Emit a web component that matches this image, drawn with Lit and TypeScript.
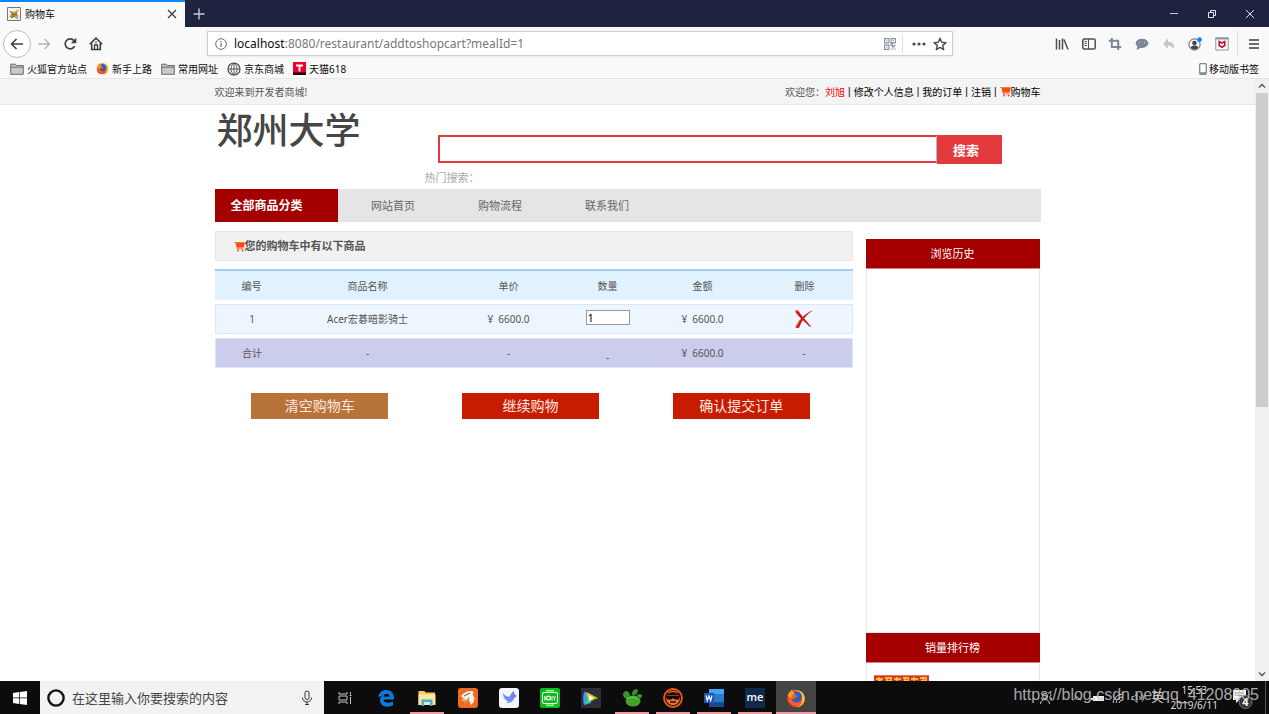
import { LitElement, html, css, svg, TemplateResult } from "lit";
import { customElement, property } from "lit/decorators.js";

const cartIcon = html`<svg class="cart" width="11" height="11" viewBox="0 0 11 11" aria-hidden="true">
  <path d="M.3 1h1.6l.4 1.2h8.4L9.6 6.4H3.6l.3 1h5.5v.8H3.1L1.4 1.8H.3z" fill="#ff4a0a" />
  <path d="M2.3 1.200h8.4L9.6 6.200H3.4z" fill="#ff4a0a" />
  <circle cx="4" cy="9.4" r="1" fill="#ff4a0a" /><circle cx="8.6" cy="9.4" r="1" fill="#ff4a0a" />
</svg>`;

const firefoxMark = svg`
  <circle cx="10" cy="10.400" r="8.600" fill="#ff5a1f"/>
  <path d="M9 3C14 1 19 5 18.800 11 18.500 16 15 19.400 10 19.400c4-1 6.500-4 6-8C15.600 7.500 13 5 9 3z" fill="#ffc021"/>
  <path d="M6 5.500C8 2 14 2.500 15.500 6.500c1.500 4-.5 7.500-4.500 8-3 .2-5-1.500-5.500-4 1.500.8 3 .5 3.500-.5.800-1 1.800-.8 2.400-1.200C10 6.500 8.500 7 6 5.500z" fill="#2b5fc4"/>
  <path d="M1.500 7.500C3 4 5 2 6.500 1.500 6 3.500 7.500 5 9.500 5.500 7 6 6 7 6.200 9L4 10z" fill="#ff9a1f"/>
  <path d="M1.300 8.500c0 5 3.500 8.500 8 10C4.500 19.500 1 14.500 1.300 8.500z" fill="#e3244f"/>`;

const folder = html`<svg width="14" height="12" viewBox="0 0 14 12" aria-hidden="true">
  <path d="M.7 1.200h4.600l1 1.300h7v8.800H.7z" fill="#c9c9c9" stroke="#6b6b6b" />
  <path d="M1 4.200h12.200" stroke="#6b6b6b" />
</svg>`;

@customElement("browser-chrome")
export class BrowserChrome extends LitElement {
  static styles = css`
    :host { display: block; flex: none; background: #f9f9fa; color: #0c0c0d;
      font: 10px/14px "Noto Sans", "Noto Sans CJK SC", sans-serif; }
    svg { flex: none; display: block; }
    button { border: 0; background: none; padding: 0; margin: 0; font: inherit; color: inherit;
      display: flex; align-items: center; justify-content: center; }
    a { color: inherit; text-decoration: none; }
    .tabs { display: flex; height: 27px; background: #202340; }
    .tab { width: 185px; box-sizing: border-box; border-top: 2px solid #0a84ff; background: #f9f9fa;
      display: flex; align-items: center; gap: 4px; padding: 0 8px 2px 7px; }
    .tab span { flex: 1; }
    .new { width: 28px; }
    .win { margin-left: auto; display: flex; }
    .win button { width: 38px; }
    .bar { display: flex; height: 33px; align-items: center; }
    .nav { width: 207px; display: flex; align-items: center; padding-left: 3px; box-sizing: border-box; }
    .back { width: 28px; height: 28px; box-sizing: border-box; border: 1px solid #bdbdbf; border-radius: 50%; background: #fff; }
    .step { width: 26px; height: 28px; }
    .url { flex: 1; height: 25px; box-sizing: border-box; display: flex; align-items: center; background: #fff;
      border: 1px solid #cfcfd1; box-shadow: 0 1px 2px #0001; padding: 0 5px 0 7px; gap: 7px; }
    .address { flex: 1; font-size: 12px; line-height: 16px; color: #77777b; white-space: nowrap; }
    .address b { font-weight: 400; color: #0c0c0d; }
    .split { width: 1px; height: 18px; background: #ddd; margin: 0 2px 0 -1px; }
    .tools { width: 186px; margin-left: 96px; display: grid; grid-template-columns: repeat(7, 1fr); }
    .menu { width: 32px; height: 26px; border-left: 1px solid #dcdcde; margin-left: 2px; }
    .marks { display: flex; height: 19px; align-items: center; gap: 9px; padding: 0 10px 1px; border-bottom: 1px solid #e6e6e6; box-sizing: border-box; }
    .marks a { display: flex; align-items: center; gap: 3px; white-space: nowrap; }
    .marks .mobile { margin-left: auto; gap: 2px; }
  `;

  render() {
    return html`
      <div class="tabs">
        <div class="tab">
          <svg width="14" height="14" viewBox="0 0 14 14"><path d="M.5.500h13v13H.5z" fill="#f4f4f4" stroke="#777"/><path d="M2 10 5 6 3 4l4 1 5-3-2 4 2 5-4-2-3 2z" fill="#c8963a"/><path d="M3 4l3 4 4-1M4 11l3-2 4 3" stroke="#59482d" fill="none" stroke-width=".8"/></svg>
          <span>购物车</span>
          <button aria-label="关闭标签页"><svg width="10" height="10" viewBox="0 0 10 10"><path d="M1 1l8 8M9 1l-8 8" stroke="#3a3a3c" stroke-width="1.200"/></svg></button>
        </div>
        <button class="new" aria-label="新标签页"><svg width="12" height="12" viewBox="0 0 12 12"><path d="M6 .500v11M.5 6h11" stroke="#c9cad3" stroke-width="1.400"/></svg></button>
        <div class="win">
          <button aria-label="最小化"><svg width="10" height="10" viewBox="0 0 10 10"><path d="M1 4.500h8" stroke="#c9cad3"/></svg></button>
          <button aria-label="还原"><svg width="10" height="10" viewBox="0 0 10 10"><path d="M1.500 3.500h5v5h-5zM3.500 3.500v-2h5v5h-2" fill="none" stroke="#e4e4ea"/></svg></button>
          <button aria-label="关闭"><svg width="10" height="10" viewBox="0 0 10 10"><path d="M1 1l8 8M9 1l-8 8" stroke="#e4e4ea"/></svg></button>
        </div>
      </div>
      <div class="bar">
        <div class="nav">
          <button class="back" aria-label="后退"><svg width="14" height="14" viewBox="0 0 14 14"><path d="M13 7H1.500M6.500 2l-5 5 5 5" fill="none" stroke="#3f3f42" stroke-width="1.600"/></svg></button>
          <button class="step" aria-label="前进"><svg width="14" height="14" viewBox="0 0 14 14"><path d="M1 7h11.500M7.500 2l5 5-5 5" fill="none" stroke="#b4b4b6" stroke-width="1.400"/></svg></button>
          <button class="step" aria-label="刷新"><svg width="14" height="14" viewBox="0 0 14 14"><path d="M11.600 9.200A5 5 0 1 1 11 3.600" fill="none" stroke="#3f3f42" stroke-width="1.700"/><path d="M13.300.800v5.400H7.900z" fill="#3f3f42"/></svg></button>
          <button class="step" aria-label="主页"><svg width="14" height="14" viewBox="0 0 14 14"><path d="M.8 7.200 7 1.200l6.200 6M2.700 6.500v6h8.600v-6" fill="none" stroke="#3f3f42" stroke-width="1.600"/><path d="M5.500 12.500V8h3v4.500M7 4.600v1.800" fill="none" stroke="#3f3f42" stroke-width="1.300"/></svg></button>
        </div>
        <div class="url">
          <svg width="12" height="12" viewBox="0 0 12 12"><circle cx="6" cy="6" r="5.300" fill="none" stroke="#6c6c70"/><path d="M6 5.200v3.600M6 2.900v1.300" stroke="#6c6c70" stroke-width="1.300"/></svg>
          <span class="address"><b>localhost</b>:8080/restaurant/addtoshopcart?mealId=1</span>
          <svg width="12" height="12" viewBox="0 0 12 12"><path d="M.6.600h4.300v4.300H.6zM7.100.600h4.300v4.300H7.100zM.6 7.100h4.300v4.300H.6zM2.200 2.700h1.200M8.700 2.700h1.200M2.200 9.200h1.200M6.500 7.500h2v1.500h1.500V7.500h1.500M7 11h1.500M10 11h1.500M6 6h3" fill="none" stroke="#8790a0" stroke-width="1.100"/></svg>
          <i class="split"></i>
          <svg width="14" height="4" viewBox="0 0 14 4"><g fill="#4a4a4f"><circle cx="2" cy="2" r="1.600"/><circle cx="7" cy="2" r="1.600"/><circle cx="12" cy="2" r="1.600"/></g></svg>
          <svg width="14" height="14" viewBox="0 0 14 14"><path d="M7 1.200l1.700 4 4.300.400-3.300 2.800 1 4.300L7 10.400l-3.700 2.300 1-4.300L1 5.600l4.300-.4z" fill="none" stroke="#4a4a4f" stroke-width="1.400" stroke-linejoin="round"/></svg>
        </div>
        <div class="tools">
          <button aria-label="书库"><svg width="14" height="14" viewBox="0 0 14 14"><path d="M1.500 1.500v11M4.500 3v9.500M7.500 1.500v11M9 2.500l4 10" stroke="#4f4f53" stroke-width="1.500"/></svg></button>
          <button aria-label="侧栏"><svg width="14" height="14" viewBox="0 0 14 14"><rect x=".8" y="2" width="12.400" height="10" rx="1.500" fill="none" stroke="#4f4f53" stroke-width="1.500"/><path d="M6.500 2v10" stroke="#4f4f53"/><path d="M2.500 4.500H5M2.500 6.500H5M2.500 8.500H5" stroke="#4f4f53" stroke-width=".9"/></svg></button>
          <button aria-label="截图"><svg width="14" height="14" viewBox="0 0 14 14"><path d="M3.800 1v9h9.400M.8 3.800h9.400V13" fill="none" stroke="#7b8796" stroke-width="2"/></svg></button>
          <button aria-label="消息"><svg width="14" height="14" viewBox="0 0 14 14"><ellipse cx="7" cy="6.300" rx="6.300" ry="4.600" fill="#7b8796"/><path d="M2.500 9 1.500 13l5-2.500z" fill="#7b8796"/><path d="M4 5.500h1M9 5.500h1" stroke="#c8ced6"/></svg></button>
          <button aria-label="撤销"><svg width="14" height="14" viewBox="0 0 14 14"><path d="M6 1.500v3.300c5 0 7 3 5.500 7.700C10.500 9.600 9 8.500 6 8.500V12L1 6.700z" fill="#c3c7cd"/></svg></button>
          <button aria-label="账户"><svg width="14" height="14" viewBox="0 0 14 14"><circle cx="6.500" cy="7.500" r="5.600" fill="none" stroke="#55575b"/><circle cx="6.500" cy="6" r="2.300" fill="#45474b"/><path d="M2.600 10.500c1.500-2.600 6.300-2.600 7.800 0-2 2.500-5.800 2.500-7.800 0z" fill="#45474b"/><circle cx="11.500" cy="2.700" r="2.400" fill="#0a84ff"/></svg></button>
          <button aria-label="安全"><svg width="14" height="14" viewBox="0 0 14 14"><path d="M.8 1h12.400v12H.8z" fill="#fff" stroke="#8a95a3"/><path d="M.5 1.500h13" stroke="#8a95a3" stroke-width="2"/><path d="M4.200 4.500 7 6l2.800-1.500v4L7 10.200 4.200 8.500z" fill="none" stroke="#c01828" stroke-width="1.600"/></svg></button>
        </div>
        <button class="menu" aria-label="菜单"><svg width="12" height="12" viewBox="0 0 12 12"><path d="M1 2h10M1 6h10M1 10h10" stroke="#3f3f42" stroke-width="1.500"/></svg></button>
      </div>
      <nav class="marks">
        <a href="#">${folder}火狐官方站点</a>
        <a href="#"><svg width="13" height="13" viewBox="0 0 20 20">${firefoxMark}</svg>新手上路</a>
        <a href="#">${folder}常用网址</a>
        <a href="#"><svg width="14" height="14" viewBox="0 0 14 14"><circle cx="7" cy="7" r="6" fill="none" stroke="#4a4a4f" stroke-width="1.200"/><path d="M7 1v12M1 7h12M7 1c-4 3-4 9 0 12M7 1c4 3 4 9 0 12" fill="none" stroke="#4a4a4f" stroke-width=".9"/></svg>京东商城</a>
        <a href="#"><svg width="13" height="13" viewBox="0 0 13 13"><path d="M0 0h13v13H0z" fill="#e8022d"/><path d="M0 10.500h13V13H0z" fill="#2b0208"/><path d="M3 3.500h7M6.500 3.500v6" stroke="#fff" stroke-width="1.800"/></svg>天猫618</a>
        <a class="mobile" href="#"><svg width="8" height="12" viewBox="0 0 8 12"><rect x=".7" y=".7" width="6.600" height="10.600" rx="1" fill="#fff" stroke="#7b8796" stroke-width="1.300"/><path d="M1 10h6" stroke="#7b8796" stroke-width="1.600"/></svg>移动版书签</a>
      </nav>
    `;
  }
}

@customElement("shop-page")
export class ShopPage extends LitElement {
  @property({ attribute: false }) items = [{ id: 1, name: "Acer宏碁暗影骑士", price: "6600.0", count: 1, sum: "6600.0" }];

  static styles = css`
    :host { display: flex; flex: 1; min-height: 0; overflow: hidden; background: #fff; color: #555;
      font: 10px/14px "Noto Sans", "Noto Sans CJK SC", sans-serif; }
    a { color: inherit; text-decoration: none; }
    svg { flex: none; }
    button { border: 0; margin: 0; padding: 0; font: inherit; color: #fff; }
    .page { flex: 1; min-width: 0; overflow: hidden; }
    .wrap { max-width: 826px; margin: 0 auto; }
    .strip { background: #f4f4f4; border-bottom: 1px solid #e9e9e9; }
    .strip .wrap { display: flex; justify-content: space-between; line-height: 23px; padding-top: 2px; }
    .links { display: flex; gap: 3px; color: #000; }
    .links i { font: 10px/22px "Liberation Sans", sans-serif; }
    .links span { color: #555; }
    .links .user { color: #f00; }
    .links .basket { display: flex; }
    .links .cart { margin-top: 5px; }
    .head { display: grid; grid-template-columns: 210px 1fr; height: 84px; }
    .logo { margin: 0 0 0 2px; font: 500 36px/46px "Noto Sans CJK SC", sans-serif; color: #464646; }
    .find { padding-top: 30px; }
    .find form { display: flex; margin: 0 39px 0 13px; height: 29px; align-items: flex-start; }
    .find input { flex: 1; min-width: 0; height: 28px; box-sizing: border-box; border: 2px solid #e4393c; border-right: 1px solid #bbb;
      background: #fff; outline: 0; border-radius: 0; padding: 0 6px; }
    .find button { width: 65px; height: 29px; background: #e4393c; font-size: 13px; font-weight: 700; padding-right: 6px; }
    .find p { margin: 6px 0 0; color: #aaa; font-size: 11px; line-height: 16px; }
    .menu { display: flex; background: #e5e5e5; height: 33px; line-height: 34px; font-size: 11px; color: #666; }
    .menu a { width: 107px; text-align: center; }
    .menu .all { width: 123px; box-sizing: border-box; padding-left: 16px; margin-right: 2px; background: #a40000; color: #fff; font-size: 12px; font-weight: 700; text-align: left; }
    .main { display: grid; grid-template-columns: minmax(0, 1fr) 174px; column-gap: 13px; padding: 9px 1px 0 0; }
    h1 { margin: 0; display: flex; align-items: center; height: 30px; box-sizing: border-box; padding-left: 18px;
      background: #f1f1f1; border: 1px solid #e8e8e8; font-size: 11px; font-weight: 700; color: #555; }
    table { width: 100%; table-layout: fixed; border-collapse: separate; border-spacing: 0 4px; margin-top: 4px; }
    th, td { height: 30px; box-sizing: border-box; padding: 0; font-weight: 400; text-align: center; vertical-align: middle; white-space: pre; }
    th { background: #e1f2ff; border-top: 2px solid #a6c9fb; height: 31px; }
    .c1 { width: 74px; } .c2 { width: 158px; } .c3 { width: 124px; } .c4 { width: 74px; } .c5 { width: 116px; }
    th:last-child, td:last-child { padding-right: 4px; }
    td { background: #edf6ff; border: solid #d9e7fd; border-width: 1px 0; }
    td:first-child { border-left-width: 1px; }
    td:last-child { border-right-width: 1px; }
    .total td { background: #ccccec; }
    .total .low { padding-top: 8px; }
    td input { display: block; width: 44px; height: 15px; box-sizing: border-box; margin: 0 auto 4px; padding: 0 1px; border: 1px solid #999;
      background: #fff; color: #000; font: 11px/13px "Noto Sans", sans-serif; border-radius: 0; }
    td button { background: none; display: block; margin: 0 auto; }
    td svg { display: block; }
    .acts { display: grid; grid-template-columns: repeat(3, 1fr); justify-items: center; margin: 21px 6px 0 0; }
    .acts button { width: 137px; height: 26px; background: #c71c00; font-size: 14px; color: #ffe9e2; }
    .acts .clear { background: #b87338; }
    aside { padding-top: 8px; }
    .box { border: 1px solid #e8e8e8; border-top: 0; }
    .box h2 { margin: 0 -1px; height: 29px; background: #a40000; color: #fff; font-size: 11px; font-weight: 400; line-height: 30px; text-align: center; border-bottom: 1px solid #d78080; }
    .history { height: 363px; }
    .rank { padding: 12px 7px 60px; }
    .promo { display: block; }
    .scroll { width: 14px; background: #f0f0f0; display: flex; flex-direction: column; align-items: center; }
    .scroll svg { margin: 3px 0; }
    .thumb { width: 12px; height: 314px; background: #cdcdcd; }
    .scroll .down { margin-top: auto; }
  `;

  render() {
    return html`
      <div class="page">
        <div class="strip"><div class="wrap">
          <span>欢迎来到开发者商城!</span>
          <div class="links"><div><span>欢迎您：</span><a class="user" href="#">刘旭</a></div><i>|</i><a href="#">修改个人信息</a><i>|</i><a href="#">我的订单</a><i>|</i><a href="#">注销</a><i>|</i><a class="basket" href="#">${cartIcon}购物车</a></div>
        </div></div>
        <div class="wrap">
          <header class="head">
            <div class="logo">郑州大学</div>
            <div class="find">
              <form @submit=${(e: Event) => e.preventDefault()}><input type="text" aria-label="搜索商品" /><button>搜索</button></form>
              <p>热门搜索：</p>
            </div>
          </header>
          <nav class="menu"><a class="all" href="#">全部商品分类</a><a href="#">网站首页</a><a href="#">购物流程</a><a href="#">联系我们</a></nav>
          <div class="main">
            <section>
              <h1>${cartIcon}您的购物车中有以下商品</h1>
              <table>
                <thead><tr><th class="c1">编号</th><th class="c2">商品名称</th><th class="c3">单价</th><th class="c4">数量</th><th class="c5">金额</th><th>删除</th></tr></thead>
                <tbody>
                  ${this.items.map((i) => html`<tr>
                    <td>${i.id}</td><td>${i.name}</td><td>¥  ${i.price}</td>
                    <td><input type="text" aria-label="数量" .value=${String(i.count)} /></td>
                    <td>¥  ${i.sum}</td>
                    <td><button aria-label="删除"><svg width="20" height="20" viewBox="0 0 20 20"><path d="M1 2.500C1.500 1 4 .8 5 2.500c2 3.500 7 9 12 14.800-.5.700-1 .7-1.500.200C11 13 5 8.500 1 2.500z" fill="#d4150f"/><path d="M19 1.500C13 5 8 11 5.500 18c-.6 1.500-3.500 1.500-4 0C3.500 13 11 3.500 19 1.500z" fill="#c8201a"/><path d="M1.500 2.500C2 1.500 3.500 1.500 4.300 2.800M2.200 17.500C3 15.500 4 14 5 12.500" stroke="#ff8a7a" fill="none"/></svg></button></td>
                  </tr>`)}
                  <tr class="total"><td>合计</td><td>-</td><td>-</td><td class="low">-</td><td>¥  6600.0</td><td>-</td></tr>
                </tbody>
              </table>
              <div class="acts"><button class="clear">清空购物车</button><button>继续购物</button><button>确认提交订单</button></div>
            </section>
            <aside>
              <div class="box"><h2>浏览历史</h2><div class="history"></div></div>
              <div class="box"><h2>销量排行榜</h2><div class="rank">
                <svg class="promo" width="55" height="40" viewBox="0 0 55 40"><path d="M0 0h55v40H0z" fill="#d8343a"/><path d="M0 .5h55" stroke="#e8765c"/><path d="M2 4h7M5 2v7M11 3h7M12 6h6M20 4h7M23 2v8M29 3h6M30 6h5M37 4h7M40 2v7M46 3h7M47 6h6M4 8l3-3M13 3v6M17 3v5M21 7h6M31 2v7M34 4v5M38 7h6M49 2v7M52 4v5" stroke="#f7e21c" stroke-width="1.300"/></svg>
              </div></div>
            </aside>
          </div>
        </div>
      </div>
      <div class="scroll">
        <svg width="8" height="8" viewBox="0 0 8 8"><path d="M1 5.500l3-3 3 3" fill="none" stroke="#505050" stroke-width="1.300"/></svg>
        <div class="thumb"></div>
        <svg class="down" width="8" height="8" viewBox="0 0 8 8"><path d="M1 2.500l3 3 3-3" fill="none" stroke="#505050" stroke-width="1.300"/></svg>
      </div>
    `;
  }
}

interface App { name: string; open?: boolean; active?: boolean; art: TemplateResult; }

const apps: App[] = [
  { name: "任务视图", art: svg`<path d="M4 4v2h8V4M4 16v-2h8v2M4 8h8v4H4zM15.500 4v2.500M15.500 9v7M14.500 7.500h2" fill="none" stroke="#c4c4c4"/>` },
  { name: "Edge", art: svg`<path d="M2 9.500C3 4.500 6 2 10.300 2c5 0 8 3.500 7.700 9.500H7.500c.3 3.500 6 4 9.500 2v3.800c-6 3-13 1.200-13-5.300 0-2.600 1.500-4.500 4-5.500C6.500 7.500 4 8 2 9.500zm5.600-.8h6c0-4-5.600-3.800-6 0z" fill="#0a7bdc"/>` },
  { name: "文件资源管理器", open: true, art: svg`<path d="M1.500 3h6l1 1.500h9.500V17H1.500z" fill="#f6cf62"/><path d="M1.500 6.500h17V17h-17z" fill="#ffe69b"/><path d="M4.500 18v-6.500h11V18H13v-4H7v4z" fill="#35b1ea"/>` },
  { name: "浏览工具", art: svg`<rect width="20" height="20" rx="3" fill="#f26a22"/><path d="M3 8c4-5 9-6 13-4-2 2-1 3 0 5s0 6-3 8l-2-5-4 3-1-4z" fill="#f2efe8"/><path d="M4 14c3 0 6-1 7-4M6 8l6-3" stroke="#5f5545" fill="none"/><path d="M3 11h5l-2 4z" fill="#f8b418"/>` },
  { name: "迅雷", art: svg`<rect width="20" height="20" rx="3" fill="#f3f5fd"/><path d="M4 5c2 3 5 4 7 3.500C12 6 13 5 15 3c0 3 .5 4 3 5-2 .5-2.500 1-3 2.500-.8 3-4 5-8 4.500l2.500-1.500C7 12.500 4 10 4 5z" fill="#6b93f4"/><path d="M11 8.500C12 6 13 5 15 3c0 3 .5 4 3 5-2 .5-2.500 1-3 2.500z" fill="#7c7bea"/>` },
  { name: "爱奇艺", art: svg`<rect width="20" height="20" rx="2" fill="#0abf16"/><rect x="2.500" y="4.500" width="15" height="11" rx="1.500" fill="none" stroke="#fff"/><path d="M5 8v4.500" stroke="#fff" stroke-width="1.200"/><circle cx="8.500" cy="10" r="1.900" fill="none" stroke="#fff" stroke-width="1.200"/><path d="M12 8v4.500M13.500 8l1 2 1-2M14.500 10v2.500M6 2.800h8M6 17.200h8" stroke="#fff"/>` },
  { name: "腾讯视频", art: svg`<path d="M0 0h20v20H0z" fill="#2c2f38"/><path d="M3 4l7 2v9l-7 2c-1-4-1-9 0-13z" fill="#27a6ff"/><path d="M5 4l12 6-10 2z" fill="#ffb515"/><path d="M4 16l13-6-7-2z" fill="#82d11c"/><path d="M8 7l5 3-5 3z" fill="#fff"/>` },
  { name: "Navicat", open: true, art: svg`<ellipse cx="11" cy="13" rx="7.500" ry="5.500" fill="#43a12d"/><path d="M1 6c1-4 6-4 7 1l-1 4c-4 0-6-2-6-5zM10 6c0-4 4-6 6-4 0 3-2 5-5 6zM14 9c1-3 4-4 6-2 0 3-2 4-4 4z" fill="#35932a"/><path d="M5 11c4-3 9-2 11 1" stroke="#86d46c" fill="none"/>` },
  { name: "辅助工具", open: true, art: svg`<circle cx="10" cy="10" r="9" fill="#1b0f08" stroke="#ef5a1c" stroke-width="1.800"/><path d="M4 7.500h12l1 3c-1 5-4 6.500-7 6.500s-6-1.500-7-6.500z" fill="#e8743c"/><path d="M3 8h14l-1 3.500h-4.500L10 10l-1.500 1.500H4z" fill="#140b06"/><path d="M5 5c3-2 7-2 10 0" stroke="#ef5a1c" stroke-width="1.500" fill="none"/><path d="M7 14h6" stroke="#2a130a" stroke-width="1.500"/>` },
  { name: "Word", open: true, art: svg`<path d="M5 1h15v18H5z" fill="#2f78d0"/><path d="M5 1h15v5H5z" fill="#41a5ee"/><path d="M5 14h15v5H5z" fill="#174a94"/><path d="M0 5h10v10H0z" fill="#1a56b4"/><path d="M2 7.500l1.300 5L5 8l1.700 4.500L8 7.500" fill="none" stroke="#fff" stroke-width="1.200"/>` },
  { name: "MyEclipse", open: true, art: svg`<path d="M0 0h20v20H0z" fill="#11294a"/><text x="10" y="13" text-anchor="middle" fill="#fff" font-size="11" font-weight="600" font-family="Open Sans, sans-serif">me</text>` },
  { name: "Firefox", open: true, active: true, art: firefoxMark as TemplateResult },
];

@customElement("task-bar")
export class TaskBar extends LitElement {
  static styles = css`
    :host { display: flex; flex: none; height: 33px; background: #0c0c0c; color: #ddd; position: relative;
      font: 10px/15px "Noto Sans", "Noto Sans CJK SC", sans-serif; }
    svg { display: block; flex: none; }
    button { border: 0; background: none; padding: 0; margin: 0; color: inherit; display: flex; align-items: center; justify-content: center; }
    .start { width: 40px; }
    .search { width: 284px; box-sizing: border-box; padding: 0 11px 0 7px; display: flex; align-items: center; gap: 7px; background: #f2f2f2; }
    .search input { flex: 1; min-width: 0; border: 0; background: none; padding: 0; outline: 0; font: 13px/20px "Noto Sans CJK SC", sans-serif; }
    .search input::placeholder { color: #444; opacity: 1; }
    .apps { display: flex; gap: 1px; padding-left: 1px; }
    .apps button { width: 40px; }
    .apps .open { background: linear-gradient(#f29aa4, #f29aa4) center bottom / 34px 2px no-repeat; }
    .apps .active { background: linear-gradient(#f29aa4, #f29aa4) center bottom / 40px 2px no-repeat #444; }
    .tray { margin-left: auto; display: flex; align-items: center; gap: 7px; }
    .lang { font-size: 12px; }
    .clock { text-align: center; margin-right: 6px; line-height: 15px; font-size: 10px; }
    .bell { width: 22px; margin-right: 5px; }
    .edge { width: 1px; height: 33px; background: #555; margin-right: 3px; }
    .mark { position: absolute; right: 10px; top: 4px; font: 16px/20px "Liberation Sans", sans-serif; color: #c4c4c4; opacity: .85; white-space: nowrap; }
  `;

  render() {
    return html`
      <button class="start" aria-label="开始"><svg width="14" height="14" viewBox="0 0 14 14"><path d="M0 2l6-1v5.600H0zM6.700.900 14 0v6.600H6.700zM0 7.300h6V13l-6-1zM6.700 7.300H14V14l-7.300-1z" fill="#fff"/></svg></button>
      <div class="search">
        <svg width="18" height="18" viewBox="0 0 18 18"><circle cx="9" cy="9" r="7.600" fill="none" stroke="#111" stroke-width="2.400"/></svg>
        <input type="text" aria-label="搜索" placeholder="在这里输入你要搜索的内容" />
        <svg width="12" height="16" viewBox="0 0 12 16"><rect x="4" y="1" width="4" height="8.500" rx="2" fill="none" stroke="#333"/><path d="M1.500 7.500c0 6 9 6 9 0M6 12v2.500M4 14.500h4" fill="none" stroke="#333"/></svg>
      </div>
      <div class="apps">
        ${apps.map((a) => html`<button class="${a.active ? "active" : a.open ? "open" : ""}" aria-label=${a.name}><svg width="20" height="20" viewBox="0 0 20 20">${a.art}</svg></button>`)}
      </div>
      <div class="tray">
        <svg width="14" height="14" viewBox="0 0 14 14"><circle cx="6" cy="5" r="2.500" fill="none" stroke="#ccc"/><path d="M1.500 13c0-6 9-6 9 0M9 2c3-1 4 3 1.500 4 2 .5 2.500 2 2.500 4" fill="none" stroke="#ccc"/></svg>
        <svg width="24" height="10" viewBox="0 0 24 10"><path d="M13 7.500l4-4 4 4" fill="none" stroke="#ccc"/></svg>
        <svg width="14" height="10" viewBox="0 0 14 10"><path d="M2 3h11v5H2zM0 5h2v2H0z" fill="#eee"/></svg>
        <svg width="12" height="12" viewBox="0 0 12 12"><path d="M1 11a10 10 0 0 1 10-9M4 11a7 7 0 0 1 7-6M7 11a4 4 0 0 1 4-3" fill="none" stroke="#ccc"/></svg>
        <svg width="14" height="12" viewBox="0 0 14 12"><path d="M1 4.500h2l3-3v9l-3-3H1zM8.500 4c1 1.200 1 2.800 0 4M11 2.500c2 2 2 5 0 7" fill="none" stroke="#bbb"/></svg>
        <span class="lang">英</span>
        <div class="clock">15:53<br />2019/6/11</div>
        <button class="bell" aria-label="通知"><svg width="22" height="24" viewBox="0 0 22 24"><path d="M2 4h13v10H8l-3 3v-3H2z" fill="#fff"/><path d="M4 7h9M4 9.500h9" stroke="#888"/><circle cx="14.500" cy="16" r="6.500" fill="#333" stroke="#777"/><text x="14.500" y="20" text-anchor="middle" fill="#fff" font-size="11" font-weight="700" font-family="Noto Sans, sans-serif">4</text></svg></button>
        <i class="edge"></i>
      </div>
      <span class="mark">https://blog.csdn.net/qq_41208905</span>
    `;
  }
}

@customElement("app-root")
export class AppRoot extends LitElement {
  static styles = css`
    :host { display: flex; flex-direction: column; height: 100vh; overflow: hidden; }
  `;
  render() {
    return html`<browser-chrome></browser-chrome><shop-page></shop-page><task-bar></task-bar>`;
  }
}
